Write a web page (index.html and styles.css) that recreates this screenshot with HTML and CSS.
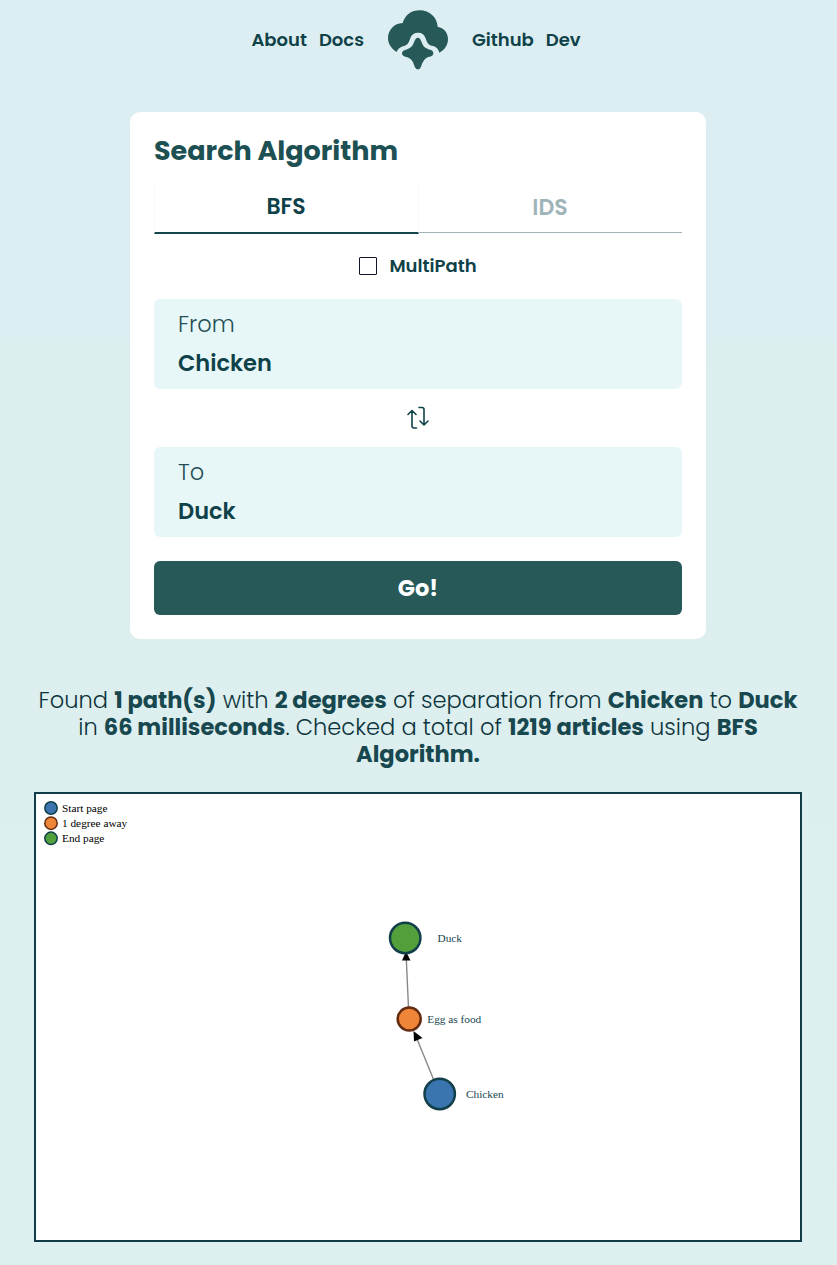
FILE: index.html
```html
<!DOCTYPE html>
<html lang="en">
<head>
<meta charset="utf-8">
<title>Search Algorithm</title>
<link rel="stylesheet" href="styles.css">
</head>
<body>
<nav class="nav">
  <div class="links links-left"><a>About</a><a>Docs</a></div>
  <svg class="logo" viewBox="30 30 180 180" width="60" height="60">
    <path d="M56 156C38 145 30 130 30 115C30 90 48 70 74 69C82 44 100 31 125 31C155 31 177 52 179 80C198 84 210 98 210 118C210 135 200 150 184 158C181 146 174 139 162 137C150 135 147 126 142 113C138 102 130 98 120 98C108 98 101 104 97 114C93 128 88 136 77 138C66 141 59 147 56 156Z"/>
    <path d="M120 113C125 113 128 118 131 127C135 140 143 146 156 149C164 151 166 155 166 160C166 166 162 169 155 170C142 172 136 182 131 194C128 204 125 208 120 208C115 208 111 204 108 194C104 182 97 173 84 171C76 169 72 166 72 160C72 154 77 151 84 149C97 146 104 139 108 127C111 118 114 113 120 113Z"/>
  </svg>
  <div class="links"><a>Github</a><a>Dev</a></div>
</nav>
<main class="card">
  <h1 class="title">Search Algorithm</h1>
  <div class="tabs">
    <div class="tab active">BFS</div>
    <div class="tab">IDS</div>
  </div>
  <label class="multi"><i class="box"></i><span>MultiPath</span></label>
  <div class="field"><span class="label">From</span><span class="value">Chicken</span></div>
  <div class="swap">
    <svg width="24" height="24" viewBox="0 0 24 24" fill="none" stroke="#0f4248" stroke-width="1.6" stroke-linecap="round" stroke-linejoin="round">
      <path d="M2 8.500L6 4.500L10 8.500M6 5V20Q6 22 8 22H10.500M13 1.500H16Q18 1.500 18 3.500V19M14 15L18 19L22 15"/>
    </svg>
  </div>
  <div class="field"><span class="label">To</span><span class="value">Duck</span></div>
  <button class="go">Go!</button>
</main>
<p class="summary">Found <b>1 path(s)</b> with <b>2 degrees</b> of separation from <b>Chicken</b> to <b>Duck</b><br>in <b>66 milliseconds</b>. Checked a total of <b>1219 articles</b> using <b>BFS<br>Algorithm.</b></p>
<section class="graph">
  <svg width="764" height="446" viewBox="36 794 764 446">
    <g stroke="#888" stroke-width="1.4">
      <path d="M439.500 1094L417 1039M409 1019L406.300 959"/>
    </g>
    <path d="M413.500 1031L422.500 1038L414 1041.500ZM406 951.500L410.500 960.500H402Z"/>
    <g stroke-width="2.500" stroke="#12404a">
      <circle cx="405.200" cy="938" r="15.200" fill="#529f3c"/>
      <circle cx="409.200" cy="1019" r="11.500" fill="#ef8536" stroke="#632b11"/>
      <circle cx="439.700" cy="1094" r="15.200" fill="#3b75af"/>
    </g>
    <g stroke-width="1.500" stroke="#12404a">
      <circle cx="51" cy="808" r="6.200" fill="#3b75af"/>
      <circle cx="51" cy="823.200" r="6.200" fill="#ef8536" stroke="#632b11"/>
      <circle cx="51" cy="838.300" r="6.200" fill="#529f3c"/>
    </g>
    <g class="key">
      <text x="62" y="812">Start page</text>
      <text x="62" y="827">1 degree away</text>
      <text x="62" y="842">End page</text>
    </g>
    <g class="names">
      <text x="437.500" y="942">Duck</text>
      <text x="427.300" y="1023">Egg as food</text>
      <text x="466" y="1098">Chicken</text>
    </g>
  </svg>
</section>
</body>
</html>
```
FILE: styles.css
```css
* { box-sizing: border-box; }
body {
  margin: 0;
  height: 1265px;
  overflow: hidden;
  background: linear-gradient(#ddeef2 0, #dceef1 342px, #dceeed 343px, #ddefee 100%);
  color: #0f4248;
  font-family: Poppins, Inter, sans-serif;
}
.nav {
  display: grid;
  grid-template-columns: 1fr 60px 1fr;
  gap: 24px;
  align-items: center;
  height: 80px;
  padding-right: 1px;
}
.links { display: flex; gap: 12px; padding-bottom: 2px; font-size: 18px; font-weight: 600; }
.links-left { justify-content: flex-end; }
.logo { fill: #275958; }
.card {
  width: 576px;
  height: 527px;
  margin: 32px 0 0 130px;
  padding: 24px;
  border-radius: 10px;
  background: #fff;
}
.title { margin: 0 0 18px; font-size: 27px; line-height: 30px; font-weight: 700; color: #1c5052; }
.tabs { display: flex; height: 52px; margin-bottom: 18px; }
.tab {
  flex: 1;
  height: 49px;
  padding-right: 1px;
  border-bottom: 1px solid #9fb4b6;
  font-size: 22px;
  line-height: 47px;
  font-weight: 600;
  text-align: center;
  color: #9fb4b8;
}
.tab.active {
  height: 50px;
  border-bottom: 2px solid #17464c;
  border-left: 1px solid #fafafa;
  border-right: 1px solid #fafafa;
  line-height: 45px;
  color: #0f4248;
}
.multi { display: flex; justify-content: center; align-items: center; gap: 12px; height: 27px; margin-top: -2px; font-size: 18px; font-weight: 600; }
.box { width: 18px; height: 18px; border: 1px solid #10152b; border-radius: 1px; }
.field {
  display: flex;
  flex-direction: column;
  height: 90px;
  padding: 6px 24px;
  border-radius: 6px;
  background: #e7f7f8;
  font-size: 22.5px;
  line-height: 39px;
}
.multi + .field { margin-top: 20px; }
.label { color: #1f4f55; font-weight: 300; }
.value { font-weight: 600; }
.swap { display: flex; justify-content: center; align-items: center; height: 58px; }
.go {
  display: block;
  width: 100%;
  height: 54px;
  margin-top: 24px;
  padding: 1px 0 0;
  border: 0;
  border-radius: 6px;
  background: #275958;
  color: #fff;
  font: 700 22.5px/53px Poppins, Inter, sans-serif;
}
.summary { margin: 48px 0 0; padding-right: 1px; color: #0c343c; font-size: 22.55px; line-height: 27px; font-weight: 300; text-align: center; white-space: nowrap; }
.summary b { font-weight: 700; color: #17474f; }
.graph { width: 768px; height: 450px; margin: 24px 0 0 34px; border: 2px solid #123d48; background: #fff; }
.graph svg { display: block; }
.graph text { font-family: "Liberation Serif", serif; font-size: 11.3px; }
.key { fill: #000; }
.names { fill: #17474f; }
```
